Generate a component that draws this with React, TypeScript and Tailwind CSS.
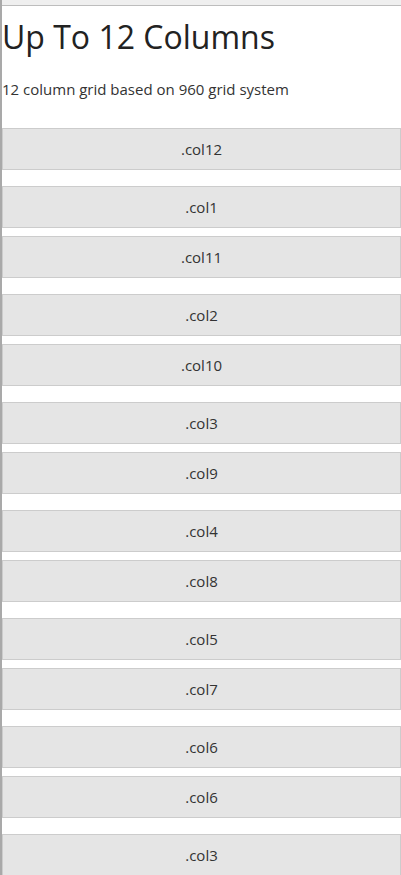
const rows: string[][] = [
  ["col12"],
  ["col1", "col11"],
  ["col2", "col10"],
  ["col3", "col9"],
  ["col4", "col8"],
  ["col5", "col7"],
  ["col6", "col6"],
  ["col3"],
];

function Cell({ name }: { name: string }) {
  return (
    <div className="h-[42px] flex items-center justify-center bg-[#e5e5e5] border border-[#cccccc] text-[15px] text-[#333]">
      .{name}
    </div>
  );
}

export default function App() {
  return (
    <div
      className="h-[875px] bg-white border-l-2 border-[#a9a9a9] overflow-hidden"
      style={{ fontFamily: '"Open Sans", sans-serif' }}
    >
      <div className="h-[6px] bg-[#efefef] border-b border-[#bdbdbd]" />
      <h1 className="mt-[12px] text-[32px] leading-[1.2] text-[#222] font-normal">
        Up To 12 Columns
      </h1>
      <p className="mt-[22px] text-[15px] leading-[1.5] text-[#333]">
        12 column grid based on 960 grid system
      </p>
      <div className="mt-[27px] flex flex-col gap-4">
        {rows.map((row, i) => (
          <div className="flex flex-col gap-2" key={i}>
            {row.map((name, j) => (
              <Cell name={name} key={j} />
            ))}
          </div>
        ))}
      </div>
    </div>
  );
}
